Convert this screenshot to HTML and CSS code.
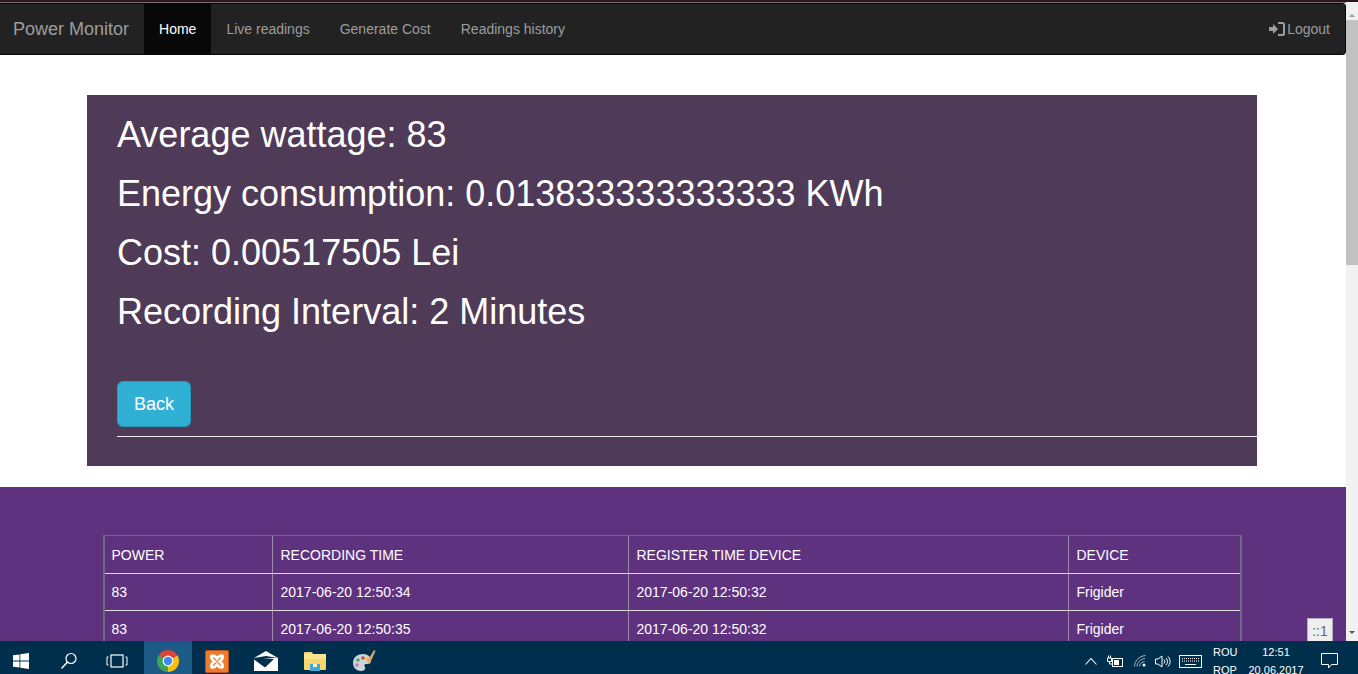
FILE: index.html
```html
<!doctype html>
<html lang="en">
<head>
    <meta charset="UTF-8">
    <title>Power Monitor</title>
    <link rel="stylesheet" href="styles.css">
</head>
<body>

<div class="browser">
    <div class="page">
        <div class="navbar">
            <a class="brand" href="#">Power Monitor</a>
            <ul class="nav-menu">
                <li class="active"><a href="#">Home</a></li>
                <li><a href="#">Live readings</a></li>
                <li><a href="#">Generate Cost</a></li>
                <li><a href="#">Readings history</a></li>
            </ul>
            <a class="logout" href="#">
                <svg width="16" height="14" viewBox="0 0 16 14"><path d="M0 5h4V2l5 5-5 5V9H0z" fill="#9d9d9d"/><path d="M9 0h4.500A2.500 2.500 0 0 1 16 2.500v9a2.500 2.500 0 0 1-2.500 2.500H9v-2h4a1 1 0 0 0 1-1V3a1 1 0 0 0-1-1H9z" fill="#9d9d9d"/></svg>
                Logout
            </a>
        </div>

        <div class="summary">
            <h1>Average wattage: 83</h1>
            <h1>Energy consumption: 0.013833333333333 KWh</h1>
            <h1>Cost: 0.00517505 Lei</h1>
            <h1>Recording Interval: 2 Minutes</h1>
            <a class="btn-back" href="#">Back</a>
            <hr>
        </div>

        <div class="readings">
            <table>
                <tr class="head-row">
                    <th class="col-power">POWER</th>
                    <th class="col-rec">RECORDING TIME</th>
                    <th class="col-reg">REGISTER TIME DEVICE</th>
                    <th>DEVICE</th>
                </tr>
                <tr>
                    <td>83</td>
                    <td>2017-06-20 12:50:34</td>
                    <td>2017-06-20 12:50:32</td>
                    <td>Frigider</td>
                </tr>
                <tr>
                    <td>83</td>
                    <td>2017-06-20 12:50:35</td>
                    <td>2017-06-20 12:50:32</td>
                    <td>Frigider</td>
                </tr>
            </table>
        </div>

        <div class="dev-badge">::1</div>
    </div>

    <div class="scrollbar">
        <svg class="arrow" width="12" height="10" viewBox="0 0 12 10"><path d="M3 7l3-3 3 3z" fill="#9a9a9a"/></svg>
        <div class="thumb"></div>
        <svg class="arrow arrow-down" width="12" height="10" viewBox="0 0 12 10"><path d="M3 3l3 3 3-3z" fill="#555"/></svg>
    </div>
</div>

<div class="taskbar">
    <div class="task-btn task-win">
        <svg width="16" height="16" viewBox="0 0 16 16"><path d="M0 2.300l6.500-.9v6.200H0zM7.300 1.300L16 0v7.600H7.300zM0 8.400h6.500v6.200L0 13.700zM7.300 8.400H16V16l-8.700-1.300z" fill="#fff"/></svg>
    </div>
    <div class="task-btn task-wide">
        <svg width="18" height="18" viewBox="0 0 18 18"><circle cx="11" cy="6.500" r="5" fill="none" stroke="#fff" stroke-width="1.200"/><path d="M7.500 10L1.500 16.500" stroke="#fff" stroke-width="1.500"/></svg>
    </div>
    <div class="task-btn task-wide task-view">
        <svg width="22" height="14" viewBox="0 0 22 14"><rect x="5" y="1" width="12" height="12" fill="none" stroke="#fff" stroke-width="1.200"/><path d="M2.500 3H1v8h1.500M19.500 3H21v8h-1.500" fill="none" stroke="#fff"/></svg>
    </div>
    <div class="task-btn task-active">
        <svg width="22" height="22" viewBox="0 0 22 22"><circle cx="11" cy="11" r="11" fill="#db4437"/><path d="M11 11L1.500 5.500A11 11 0 0 0 11 22z" fill="#3aa757"/><path d="M11 11V22A11 11 0 0 0 20.500 5.500z" fill="#f4c20d"/><circle cx="11" cy="11" r="5.400" fill="#fff"/><circle cx="11" cy="11" r="4.200" fill="#4285f4"/></svg>
    </div>
    <div class="task-btn">
        <svg width="24" height="23" viewBox="0 0 24 23"><rect width="24" height="23" rx="2" fill="#b9531d"/><rect x="1" y="1" width="22" height="21" rx="1" fill="#ee7c2c"/><path d="M6.500 6c2.500-1.200 4 .4 5.500 2.500C13.500 6.400 15 4.800 17.500 6c1 2.600-1.200 4-3 5.500 1.800 1.500 4 2.900 3 5.500-2.500 1.200-4-.4-5.500-2.500C10.500 16.600 9 18.200 6.500 17c-1-2.600 1.200-4 3-5.500-1.800-1.500-4-2.900-3-5.500z" fill="none" stroke="#fff" stroke-width="2.800"/></svg>
    </div>
    <div class="task-btn">
        <svg width="24" height="20" viewBox="0 0 24 20"><path d="M0 7L12 0l12 7-12-2z" fill="#fff"/><path d="M0 8.500l11 8L20 8 9 7.500 24 6.800V20H0z" fill="#fff"/></svg>
    </div>
    <div class="task-btn">
        <svg width="22" height="20" viewBox="0 0 22 20"><path d="M0 2a1 1 0 0 1 1-1h7l1 2h12a1 1 0 0 1 1 1v14a1 1 0 0 1-1 1H1a1 1 0 0 1-1-1z" fill="#f5d76e"/><rect x="0" y="3" width="22" height="5" fill="#fbe58f"/><path d="M6 13h10v7H6z" fill="#3fa9dc"/><path d="M9 13h4v3H9z" fill="#f5efd0"/></svg>
    </div>
    <div class="task-btn">
        <svg width="24" height="24" viewBox="0 0 24 24"><path d="M1 14c0-6 5-9 10-9 5 0 8 3 8 7 0 3-3 3-5 3-2 0-2 2-1 3 1 2-1 4-4 4-4 0-8-3-8-8z" fill="#c9d4de"/><circle cx="6" cy="11" r="1.700" fill="#3aa757"/><circle cx="11" cy="9" r="1.700" fill="#db4437"/><circle cx="5" cy="16" r="1.700" fill="#e06bb0"/><circle cx="15" cy="10" r="1.500" fill="#f4c20d"/><path d="M15 13L22 1l1.500 1L18 14z" fill="#e0a860"/></svg>
    </div>

    <div class="tray">
        <svg class="tray-icon tray-chevron" width="12" height="8" viewBox="0 0 12 8"><path d="M.5 7.500L6 1.500l5.500 6" fill="none" stroke="#fff" stroke-width="1.100"/></svg>
        <svg class="tray-icon tray-battery" width="16" height="12" viewBox="0 0 16 12"><rect x="5.500" y="3.500" width="10" height="8" fill="none" stroke="#fff"/><rect x="7" y="5" width="5" height="5" fill="#fff"/><path d="M.5 3h4v3.500h-4zM1.500 .5V3M3.500 .5V3M2.500 6.500V9H5" stroke="#fff" fill="none"/></svg>
        <svg class="tray-icon tray-wifi" width="12" height="12" viewBox="0 0 12 12"><path d="M.5 11.500C.5 6 5 1 11.500 .5M3 11.500C3 8 6 4 11 3.500M5.500 11.500c0-2.500 2-4.500 5-5" fill="none" stroke="#a8b5bf"/><circle cx="10" cy="10" r="1.500" fill="#fff"/></svg>
        <svg class="tray-icon tray-volume" width="16" height="13" viewBox="0 0 16 13"><path d="M.5 4h2.500L7 1v11L3 9H.5z" fill="none" stroke="#fff"/><path d="M9 4.500a3 3 0 0 1 0 4M11 3a5 5 0 0 1 0 7M13 1.500a7 7 0 0 1 0 10" fill="none" stroke="#fff"/></svg>
        <svg class="tray-icon tray-keys" width="23" height="13" viewBox="0 0 23 13"><rect x=".5" y=".5" width="22" height="12" fill="none" stroke="#fff"/><path d="M3 3.500h17M3 6h17" stroke="#fff" stroke-dasharray="1 1"/><path d="M6 9.500h11" stroke="#fff"/></svg>
        <div class="lang"><span>ROU</span><span>ROP</span></div>
        <div class="clock"><span>12:51</span><span>20.06.2017</span></div>
        <svg class="tray-notif" width="17" height="16" viewBox="0 0 17 16"><path d="M.5.500h16v11h-6l-3 3.500v-3.500h-7z" fill="none" stroke="#fff"/></svg>
    </div>
</div>

</body>
</html>
```

FILE: styles.css
```css
*{
    margin: 0;
    padding: 0;
    box-sizing: border-box;
}
a{
    text-decoration: none;
}

body,html{
    width:100%;
    height:100%;
    overflow: hidden;
}

body{
    display: flex;
    flex-direction: column;
    font-family: "Liberation Sans", Arial, sans-serif;
    font-size: 14px;
    color: #fff;
    background-color: #fff;
}

.browser{
    flex: 1;
    display: flex;
    min-height: 0;
    border-top: 2px solid #2a1620;
}

.page{
    flex: 1;
    position: relative;
    overflow: hidden;
    border-top: 1px solid #7d6d74;
}

/* navbar */
.navbar{
    display: flex;
    align-items: stretch;
    height: 52px;
    background-color: #222;
    border: 1px solid #080808;
    border-left: 0;
    border-radius: 0 4px 4px 0;
}
.brand{
    padding: 0 15px 0 13px;
    font-size: 18px;
    line-height: 50px;
    color: #9d9d9d;
}
.nav-menu{
    display: flex;
    list-style: none;
}
.nav-menu a{
    display: block;
    padding: 0 15px;
    line-height: 50px;
    color: #9d9d9d;
}
.nav-menu .active a{
    color: #fff;
    background-color: #080808;
}
.logout{
    margin-left: auto;
    padding-right: 15px;
    line-height: 50px;
    color: #9d9d9d;
}
.logout svg{
    vertical-align: -2px;
    margin-right: -2px;
}

/* summary */
.summary{
    margin: 40px 89px 21px 87px;
    height: 371px;
    padding: 20px 0 0 30px;
    background-color: #4f3b58;
}
.summary h1{
    font-size: 36px;
    font-weight: 400;
    line-height: 39px;
    margin-bottom: 20px;
}
.btn-back{
    display: inline-block;
    margin-top: 30px;
    width: 74px;
    height: 46px;
    line-height: 44px;
    text-align: center;
    font-size: 18px;
    color: #fff;
    background-color: #31b0d5;
    border: 1px solid #269abc;
    border-radius: 6px;
}
.summary hr{
    margin-top: 9px;
    border: 0;
    border-top: 1px solid #eee;
}

/* table */
.readings{
    height: 300px;
    padding: 48px 104px 0 103px;
    background-color: #5f3280;
}
.readings table{
    width: 100%;
    table-layout: fixed;
    border-collapse: separate;
    border-spacing: 0;
    border: 1px solid #6f6a7c;
    border-left-width: 2px;
    border-right-width: 2px;
}
.readings th,
.readings td{
    height: 37px;
    padding: 0 0 0 7.500px;
    font-weight: 400;
    text-align: left;
    border-bottom: 1px solid #ddd;
    border-left: 1px solid #9a8aa5;
}
.readings th:first-child,
.readings td:first-child{
    padding-left: 6.500px;
    border-left: 0;
}
.readings .head-row th{
    height: 38px;
}
.col-power{ width: 167px; }
.col-rec{ width: 356px; }
.col-reg{ width: 440px; }

.dev-badge{
    position: absolute;
    right: 13px;
    bottom: 0;
    width: 26px;
    height: 23px;
    line-height: 24px;
    text-align: center;
    font-size: 14px;
    color: #666;
    background-color: #eee;
    border: 1px solid #b5aebb;
    border-bottom: 0;
}

/* scrollbar */
.scrollbar{
    width: 12px;
    display: flex;
    flex-direction: column;
    background-color: #f1f1f1;
}
.arrow{
    display: block;
    flex: none;
    margin-top: 8px;
}
.thumb{
    height: 245px;
    background-color: #c1c1c1;
}
.arrow-down{
    margin-top: auto;
    margin-bottom: 3px;
}

/* taskbar */
.taskbar{
    flex: none;
    height: 33px;
    display: flex;
    overflow: hidden;
    background-color: #002f4d;
}
.task-btn{
    width: 49px;
    height: 33px;
    padding-top: 7px;
    display: flex;
    align-items: center;
    justify-content: center;
}
.task-win{
    width: 45px;
    padding-right: 3px;
}
.task-wide{
    width: 48px;
}
.task-view{
    margin-right: 3px;
}
.task-active{
    width: 48px;
    background-color: #1c5a88;
}
.tray{
    margin-left: auto;
    padding-top: 7px;
    display: flex;
    align-items: center;
    height: 33px;
    font-size: 11px;
}
.tray-chevron{ margin-right: 10px; }
.tray-battery{ margin-right: 11px; }
.tray-wifi{ margin-right: 9px; }
.tray-volume{ margin-right: 8px; }
.tray-keys{ margin-right: 11px; }
.lang{
    width: 36px;
    display: flex;
    flex-direction: column;
    line-height: 18px;
}
.clock{
    width: 54px;
    display: flex;
    flex-direction: column;
    align-items: center;
    line-height: 18px;
}
.tray-notif{
    margin: 0 20px 0 18px;
}
```
